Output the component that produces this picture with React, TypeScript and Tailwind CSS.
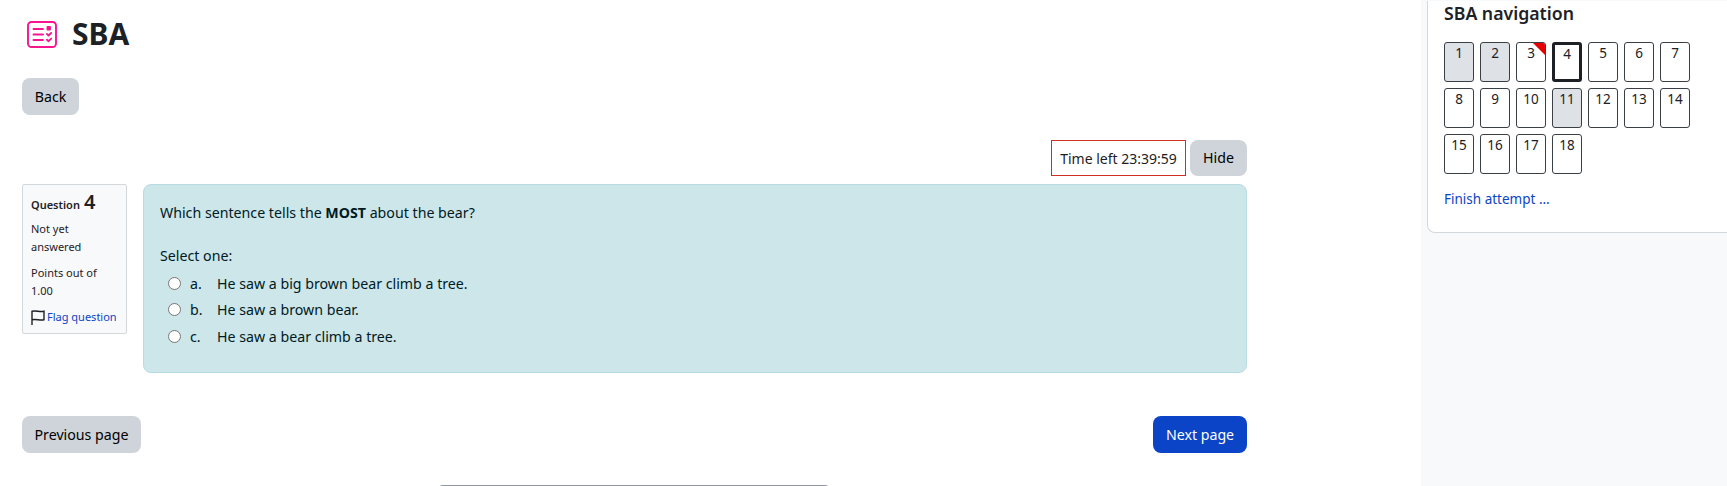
const ROWS = [
  [1, 2, 3, 4, 5, 6, 7],
  [8, 9, 10, 11, 12, 13, 14],
  [15, 16, 17, 18],
];
const ANSWERED = [1, 2, 11];

const ANSWERS = [
  { key: 'a.', text: 'He saw a big brown bear climb a tree.' },
  { key: 'b.', text: 'He saw a brown bear.' },
  { key: 'c.', text: 'He saw a bear climb a tree.' },
];

const QuizIcon = () => (
  <svg width="30" height="27" viewBox="0 0 30 27" fill="none" stroke="#f7158f" strokeWidth="1.9" strokeLinecap="round" strokeLinejoin="round">
    <rect x="1" y="1" width="28" height="25" rx="3.5" />
    <path d="M6.5 8h9.5M6.5 13.5h9.5M6.5 19h9.5" />
    <rect x="20.5" y="6" width="2.5" height="2.5" fill="#f7158f" />
    <path d="M20 13l1.6 1.5 2.6-2.6M20 18.7l1.6 1.5 2.6-2.6" />
  </svg>
);

const FlagIcon = () => (
  <svg width="14" height="15" viewBox="0 0 14 15" fill="none" stroke="#1d2125" strokeWidth="1.4" className="shrink-0">
    <path d="M1 15V1.2c4-1 8 1 12 0v8.6c-4 1-8-1-12 0" />
  </svg>
);

const NavCell = ({ n }: { n: number }) => {
  const current = n === 4;
  const answered = ANSWERED.includes(n);
  return (
    <div
      className={`relative h-10 w-[30px] overflow-hidden rounded-[3px] text-center text-[13.5px] leading-[18px] text-[#1d2125] ${
        current ? 'border-[3px] border-[#1d2125] bg-white' : 'border border-[#3a3f44] pt-px'
      } ${answered ? 'bg-[#dee2e6]' : 'bg-white'}`}
    >
      {n}
      {n === 3 && (
        <svg width="14" height="14" viewBox="0 0 14 14" className="absolute -right-px -top-px">
          <path d="M0 0h14v14z" fill="#e60000" />
        </svg>
      )}
    </div>
  );
};

export default function App() {
  return (
    <div className="flex h-[486px] w-[1727px] overflow-hidden bg-white font-['Noto_Sans',sans-serif] text-[14.2px] text-[#1d2125]">
      <main className="flex w-[1421px] shrink-0 flex-col pl-[22px] pr-[174px]">
        <div className="ml-[5px] mt-4 flex shrink-0 items-center gap-[15px]">
          <QuizIcon />
          <h1 className="text-[30px] font-bold leading-[36px]">SBA</h1>
        </div>

        <button className="mt-[26px] h-[37px] w-[57px] shrink-0 rounded-lg bg-[#ced4da] text-black">Back</button>

        <div className="mt-[25px] flex shrink-0 justify-end gap-1">
          <div className="flex h-9 w-[135px] items-center justify-center border border-[#ca3120] text-[14px]">Time left 23:39:59</div>
          <button className="h-9 w-[57px] rounded-lg bg-[#ced4da] text-black">Hide</button>
        </div>

        <div className="mt-2 flex shrink-0 items-start gap-4">
          <div className="h-[150px] w-[105px] shrink-0 rounded-[2px] border border-[#d3d8dd] bg-[#f8f9fa] px-2 pt-[7px] text-[11px] leading-[18px]">
            <div className="flex items-baseline font-semibold">
              Question <span className="ml-1 text-[20px] leading-[20px]">4</span>
            </div>
            <p className="mt-[6px]">Not yet answered</p>
            <p className="mt-2">Points out of 1.00</p>
            <a className="mt-2 flex items-center gap-0.5 whitespace-nowrap text-[#0b44c6]">
              <FlagIcon />
              Flag question
            </a>
          </div>

          <div className="h-[189px] flex-1 rounded-lg border border-[#b8dce2] bg-[#cce6ea] px-4 pt-[17px] text-[#001a1e]">
            <p className="leading-[21px]">
              Which sentence tells the <strong>MOST</strong> about the bear?
            </p>
            <p className="mt-[22px] leading-[21px]">Select one:</p>
            <div className="mt-1 flex flex-col">
              {ANSWERS.map((a) => (
                <div key={a.key} className="flex h-[26.5px] items-center pl-2">
                  <span className="h-[13px] w-[13px] rounded-full border border-[#767676] bg-white" />
                  <span className="ml-[9px] w-[27px]">{a.key}</span>
                  <span>{a.text}</span>
                </div>
              ))}
            </div>
          </div>
        </div>

        <div className="mt-[43px] flex shrink-0 justify-between">
          <button className="h-[37px] w-[119px] rounded-lg bg-[#ced4da] text-black">Previous page</button>
          <button className="h-[37px] w-[94px] rounded-lg bg-[#0b44c6] text-white">Next page</button>
        </div>

        <div className="ml-[415px] mt-8 h-10 w-[394px] shrink-0 rounded-t-md border border-[#8f959e] bg-white" />
      </main>

      <aside className="flex-1 bg-[#f8f9fa] pl-1.5">
        <div className="-mt-px h-[232px] w-[320px] rounded-bl-lg border-b border-l border-[#d3d8dd] bg-white pl-4">
          <h2 className="mt-0.5 text-[17.7px] font-semibold leading-[24px]">SBA navigation</h2>
          <div className="mt-[17px] flex flex-col gap-1.5">
            {ROWS.map((row) => (
              <div key={row[0]} className="flex gap-1.5">
                {row.map((n) => (
                  <NavCell key={n} n={n} />
                ))}
              </div>
            ))}
          </div>
          <a className="mt-[15px] block text-[13.5px] leading-[20px] text-[#0b44c6]">Finish attempt ...</a>
        </div>
      </aside>
    </div>
  );
}
